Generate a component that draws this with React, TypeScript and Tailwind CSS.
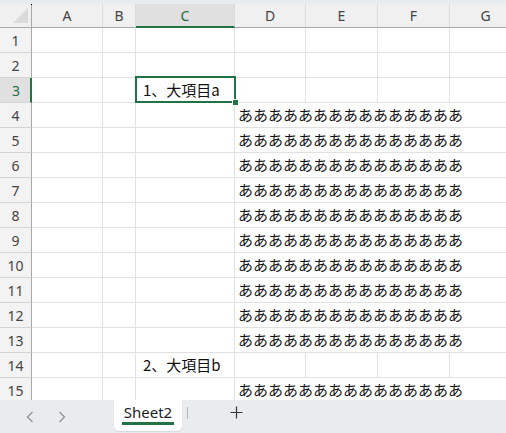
import React from "react";

const cols = [
  { name: "A", w: "w-[71px]" },
  { name: "B", w: "w-[33px]" },
  { name: "C", w: "w-[99px]" },
  { name: "D", w: "w-[71px]" },
  { name: "E", w: "w-[72px]" },
  { name: "F", w: "w-[72px]" },
  { name: "G", w: "w-[72px]" },
];

const A = "あああああああああああああああ";
const jp = { fontFamily: '"Noto Sans CJK JP", "Noto Sans", sans-serif' };

type RowSpec = { n: number; c?: string; d?: string };
const rows: RowSpec[] = [
  { n: 1 },
  { n: 2 },
  { n: 3, c: "1、大項目a" },
  { n: 4, d: A },
  { n: 5, d: A },
  { n: 6, d: A },
  { n: 7, d: A },
  { n: 8, d: A },
  { n: 9, d: A },
  { n: 10, d: A },
  { n: 11, d: A },
  { n: 12, d: A },
  { n: 13, d: A },
  { n: 14, c: "2、大項目b" },
  { n: 15, d: A },
];

function Row({ r }: { r: RowSpec }) {
  const sel = r.n === 3;
  return (
    <div className="flex h-[25px] shrink-0">
      <div
        className={
          "w-[32px] shrink-0 flex items-center justify-center text-[14px] border-b border-[#d4d4d4] " +
          (sel
            ? "bg-[#e0e0e0] text-[#1d6b46] border-r-[2px] border-r-[#217346] pl-[2px]"
            : "bg-[#f3f3f3] text-[#444] border-r border-r-[#a9a9a9]")
        }
        style={{ fontFamily: '"Noto Sans", sans-serif' }}
      >
        {r.n}
      </div>
      <div className="w-[71px] shrink-0 border-r border-b border-[#e1e1e1] bg-white" />
      <div className="w-[33px] shrink-0 border-r border-b border-[#e1e1e1] bg-white" />
      <div
        className="w-[99px] shrink-0 border-r border-b border-[#e1e1e1] bg-white flex items-center pl-[7px] text-[15px] text-[#111] whitespace-nowrap"
        style={jp}
      >
        {r.c}
      </div>
      {r.d ? (
        <div
          className="flex-1 border-b border-[#e1e1e1] bg-white flex items-center pl-[3px] text-[15px] text-[#111] whitespace-nowrap overflow-hidden"
          style={jp}
        >
          {r.d}
        </div>
      ) : (
        <>
          <div className="w-[71px] shrink-0 border-r border-b border-[#e1e1e1] bg-white" />
          <div className="w-[72px] shrink-0 border-r border-b border-[#e1e1e1] bg-white" />
          <div className="w-[72px] shrink-0 border-r border-b border-[#e1e1e1] bg-white" />
          <div className="flex-1 border-b border-[#e1e1e1] bg-white" />
        </>
      )}
    </div>
  );
}

export default function App() {
  return (
    <div className="w-[506px] h-[433px] overflow-hidden bg-white relative flex flex-col select-none">
      {/* top band */}
      <div className="h-[4px] bg-[#e8ecf0] shrink-0" />
      {/* column header */}
      <div className="flex h-[24px] shrink-0 bg-[#f0f0f0]" style={{ fontFamily: '"Noto Sans", sans-serif' }}>
        <div className="w-[32px] shrink-0 relative border-r border-b border-[#a9a9a9]">
          <svg className="absolute left-[13px] top-[4px]" width="15" height="15" viewBox="0 0 15 15">
            <polygon points="0,15 15,0 15,15" fill="#dadada" />
          </svg>
          <div className="absolute right-[-1px] top-0 w-[1px] h-[1px] bg-black" />
        </div>
        {cols.map((c) => {
          const s = c.name === "C";
          return (
            <div
              key={c.name}
              className={
                c.w +
                " shrink-0 flex items-center justify-center text-[14px] border-r border-r-[#dadada] " +
                (s
                  ? "bg-[#e0e0e0] text-[#1d6b46] border-b-[2px] border-b-[#217346] pt-[1px]"
                  : "text-[#444] border-b border-b-[#a9a9a9]")
              }
            >
              {c.name}
            </div>
          );
        })}
      </div>
      {/* grid */}
      <div className="flex flex-col h-[372px] overflow-hidden shrink-0">
        {rows.map((r) => (
          <Row key={r.n} r={r} />
        ))}
      </div>
      {/* selection */}
      <div className="absolute left-[135px] top-[76px] w-[101px] h-[27px] border-2 border-[#217346] pointer-events-none">
        <div className="absolute right-[-5px] bottom-[-5px] w-[7px] h-[7px] bg-[#217346] border border-white" />
      </div>
      {/* tab bar */}
      <div className="flex-1 bg-[#e9ebee] relative flex items-start" style={{ fontFamily: '"Noto Sans", sans-serif' }}>
        <div className="w-[114px] h-[33px] flex items-center text-[#9a9a9a]">
          <svg className="ml-[26px]" width="8" height="12" viewBox="0 0 8 12">
            <path d="M6.5 1 L1.5 6 L6.5 11" fill="none" stroke="#8f8f8f" strokeWidth="1.2" />
          </svg>
          <svg className="ml-[24px]" width="8" height="12" viewBox="0 0 8 12">
            <path d="M1.5 1 L6.5 6 L1.5 11" fill="none" stroke="#8f8f8f" strokeWidth="1.2" />
          </svg>
        </div>
        <div className="w-[68px] h-[31px] bg-white rounded-b-[5px] flex flex-col items-center justify-start pt-[2px] shadow-[0_1px_1px_rgba(0,0,0,0.08)]">
          <span className="text-[15px] text-[#222] leading-[20px]">Sheet2</span>
          <div className="w-[52px] h-[3px] bg-[#217346] mt-[0px]" />
        </div>
        <div className="w-[1px] h-[12px] bg-[#b5b5b5] ml-[5px] mt-[7px]" />
        <div className="ml-[42px] mt-[6px] text-[#333]">
          <svg width="13" height="13" viewBox="0 0 13 13">
            <path d="M6.5 0.5 V12.5 M0.5 6.5 H12.5" stroke="#333" strokeWidth="1.2" />
          </svg>
        </div>
      </div>
    </div>
  );
}
